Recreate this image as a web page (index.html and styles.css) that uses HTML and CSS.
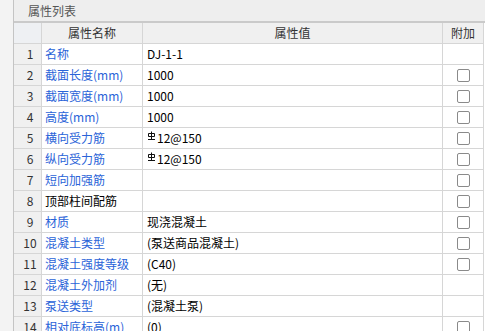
FILE: index.html
```html
<!DOCTYPE html>
<html lang="zh-CN">
<head>
    <meta charset="UTF-8">
    <meta name="viewport" content="width=device-width, initial-scale=1.0">
    <title>属性列表</title>
    <link rel="stylesheet" href="styles.css">
</head>
<body>
    <div class="window">
        <div class="side"></div>
        <div class="panel">
            <div class="panel-title">属性列表</div>
            <table class="prop-table">
                <colgroup>
                    <col class="col-no">
                    <col class="col-name">
                    <col class="col-value">
                    <col class="col-extra">
                </colgroup>
                <thead>
                    <tr>
                        <th class="no"></th>
                        <th>属性名称</th>
                        <th>属性值</th>
                        <th>附加</th>
                    </tr>
                </thead>
                <tbody>
                    <tr>
                        <td class="no">1</td>
                        <td class="name">名称</td>
                        <td class="value">DJ-1-1</td>
                        <td class="extra"></td>
                    </tr>
                    <tr>
                        <td class="no">2</td>
                        <td class="name">截面长度(mm)</td>
                        <td class="value">1000</td>
                        <td class="extra"><span class="check"></span></td>
                    </tr>
                    <tr>
                        <td class="no">3</td>
                        <td class="name">截面宽度(mm)</td>
                        <td class="value">1000</td>
                        <td class="extra"><span class="check"></span></td>
                    </tr>
                    <tr>
                        <td class="no">4</td>
                        <td class="name">高度(mm)</td>
                        <td class="value">1000</td>
                        <td class="extra"><span class="check"></span></td>
                    </tr>
                    <tr>
                        <td class="no">5</td>
                        <td class="name">横向受力筋</td>
                        <td class="value"><svg class="rebar" width="9" height="10" viewBox="0 0 9 10"><path d="M4.5 0.5V8.5M1.5 2.5H7.5V5.5H1.5ZM1 8.5H8" fill="none" stroke="#111" stroke-width="1"/></svg>12@150</td>
                        <td class="extra"><span class="check"></span></td>
                    </tr>
                    <tr>
                        <td class="no">6</td>
                        <td class="name">纵向受力筋</td>
                        <td class="value"><svg class="rebar" width="9" height="10" viewBox="0 0 9 10"><path d="M4.5 0.5V8.5M1.5 2.5H7.5V5.5H1.5ZM1 8.5H8" fill="none" stroke="#111" stroke-width="1"/></svg>12@150</td>
                        <td class="extra"><span class="check"></span></td>
                    </tr>
                    <tr>
                        <td class="no">7</td>
                        <td class="name">短向加强筋</td>
                        <td class="value"></td>
                        <td class="extra"><span class="check"></span></td>
                    </tr>
                    <tr>
                        <td class="no">8</td>
                        <td class="name plain">顶部柱间配筋</td>
                        <td class="value"></td>
                        <td class="extra"><span class="check"></span></td>
                    </tr>
                    <tr>
                        <td class="no">9</td>
                        <td class="name">材质</td>
                        <td class="value">现浇混凝土</td>
                        <td class="extra"><span class="check"></span></td>
                    </tr>
                    <tr>
                        <td class="no">10</td>
                        <td class="name">混凝土类型</td>
                        <td class="value">(泵送商品混凝土)</td>
                        <td class="extra"><span class="check"></span></td>
                    </tr>
                    <tr>
                        <td class="no">11</td>
                        <td class="name">混凝土强度等级</td>
                        <td class="value">(C40)</td>
                        <td class="extra"><span class="check"></span></td>
                    </tr>
                    <tr>
                        <td class="no">12</td>
                        <td class="name">混凝土外加剂</td>
                        <td class="value">(无)</td>
                        <td class="extra"></td>
                    </tr>
                    <tr>
                        <td class="no">13</td>
                        <td class="name">泵送类型</td>
                        <td class="value">(混凝土泵)</td>
                        <td class="extra"></td>
                    </tr>
                    <tr>
                        <td class="no">14</td>
                        <td class="name">相对底标高(m)</td>
                        <td class="value">(0)</td>
                        <td class="extra"><span class="check"></span></td>
                    </tr>
                </tbody>
            </table>
        </div>
    </div>
</body>
</html>
```

FILE: styles.css
```css
html, body {
    margin: 0;
    height: 100%;
    overflow: hidden;
}

body {
    font-family: "Noto Sans CJK SC", "Noto Sans", sans-serif;
    font-size: 12px;
    color: #000;
    background-color: #fff;
}

.window {
    display: flex;
    height: 100%;
}

.side {
    width: 13px;
    flex-shrink: 0;
    background-color: #f3f3f3;
    border-right: 1px solid #c4c4c4;
}

.panel {
    flex: 1;
    background-color: #fff;
}

.panel-title {
    height: 21px;
    line-height: 21px;
    padding-left: 14px;
    color: #555;
    background-color: #eeeeee;
    border-bottom: 2px solid #cacaca;
}

.prop-table {
    width: 470px;
    table-layout: fixed;
    border-collapse: separate;
    border-spacing: 0;
}

.col-no { width: 28px; }
.col-name { width: 101px; }
.col-value { width: 300px; }
.col-extra { width: 41px; }

.prop-table th,
.prop-table td {
    height: 20px;
    line-height: 20px;
    padding: 0;
    border-right: 1px solid #d6d6d6;
    border-bottom: 1px solid #d6d6d6;
    white-space: nowrap;
    overflow: hidden;
}

.prop-table th {
    font-weight: normal;
    color: #333;
    background-color: #f0f0f0;
    text-align: center;
}

.prop-table th.no {
    background-color: #eef0f3;
}

.prop-table td.no {
    background-color: #f0f0f0;
    color: #333;
    text-align: center;
    padding-left: 5px;
}

.prop-table td.name {
    padding-left: 3px;
    color: #2a63d8;
}

.prop-table td.name.plain {
    color: #000;
}

.prop-table td.value {
    padding-left: 4px;
}

.prop-table td.extra {
    text-align: center;
}

.rebar {
    vertical-align: 2px;
    margin-right: 1px;
}

.check {
    display: inline-block;
    width: 11px;
    height: 11px;
    border: 1px solid #8a8a8a;
    border-radius: 2px;
    background-color: #fff;
    vertical-align: -2px;
}
```
